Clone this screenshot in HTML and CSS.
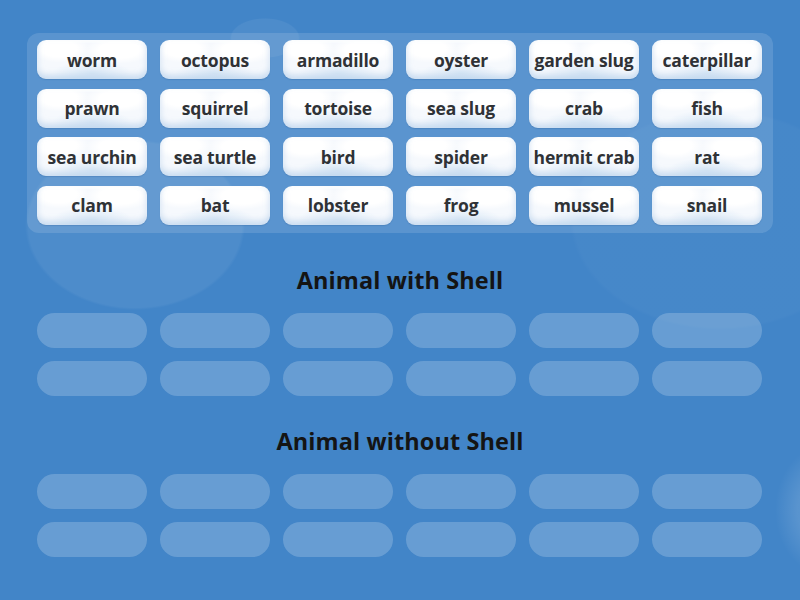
FILE: index.html
```html
<!DOCTYPE html>
<html><head><meta charset="utf-8">
<title>Animal with Shell / Animal without Shell</title>
<link rel="stylesheet" href="styles.css">
</head><body>

<div class="board">

<!-- words still to sort -->
<div class="pool">
	<div class="card">worm</div>
	<div class="card">octopus</div>
	<div class="card">armadillo</div>
	<div class="card">oyster</div>
	<div class="card">garden slug</div>
	<div class="card">caterpillar</div>
	<div class="card">prawn</div>
	<div class="card">squirrel</div>
	<div class="card">tortoise</div>
	<div class="card">sea slug</div>
	<div class="card">crab</div>
	<div class="card">fish</div>
	<div class="card">sea urchin</div>
	<div class="card">sea turtle</div>
	<div class="card">bird</div>
	<div class="card">spider</div>
	<div class="card">hermit crab</div>
	<div class="card">rat</div>
	<div class="card">clam</div>
	<div class="card">bat</div>
	<div class="card">lobster</div>
	<div class="card">frog</div>
	<div class="card">mussel</div>
	<div class="card">snail</div>
</div>

<h2 class="group-title">Animal with Shell</h2>
<div class="slots">
	<div class="slot"></div><div class="slot"></div><div class="slot"></div>
	<div class="slot"></div><div class="slot"></div><div class="slot"></div>
	<div class="slot"></div><div class="slot"></div><div class="slot"></div>
	<div class="slot"></div><div class="slot"></div><div class="slot"></div>
</div>

<h2 class="group-title">Animal without Shell</h2>
<div class="slots">
	<div class="slot"></div><div class="slot"></div><div class="slot"></div>
	<div class="slot"></div><div class="slot"></div><div class="slot"></div>
	<div class="slot"></div><div class="slot"></div><div class="slot"></div>
	<div class="slot"></div><div class="slot"></div><div class="slot"></div>
</div>

</div>

</body></html>
```

FILE: styles.css
```css
html, body {
	margin: 0;
	height: 100%;
}
body {
	font-family: "Open Sans", "Liberation Sans", sans-serif;
	background-color: #4285c8;
	background-image:
		radial-gradient(ellipse 110px 85px at 135px 225px, rgba(255,255,255,.06) 97%, transparent 100%),
		radial-gradient(ellipse 35px 20px at 265px 38px, rgba(255,255,255,.06) 95%, transparent 100%),
		radial-gradient(ellipse 150px 110px at 720px 220px, rgba(255,255,255,.025) 97%, transparent 100%),
		radial-gradient(ellipse 50px 65px at 825px 510px, rgba(255,255,255,.12) 55%, transparent 100%);
	background-repeat: no-repeat;
	overflow: hidden;
}
.board {
	padding: 33px 27px 0;
}
.pool {
	display: grid;
	grid-template-columns: repeat(6, 110px);
	grid-auto-rows: 39px;
	column-gap: 13px;
	row-gap: 9.5px;
	padding: 7px 10px 8px;
	background: rgba(255,255,255,.13);
	border-radius: 12px;
}
.card {
	display: flex;
	align-items: center;
	justify-content: center;
	font-size: 17.5px;
	font-weight: 700;
	color: #2f3236;
	letter-spacing: -.2px;
	white-space: nowrap;
	border-radius: 9px;
	background:
		radial-gradient(ellipse 30px 14px at 20% 22%, #fff 60%, transparent 100%),
		radial-gradient(ellipse 34px 14px at 75% 25%, #fff 60%, transparent 100%),
		radial-gradient(ellipse 40px 12px at 50% 85%, rgba(205,225,243,.7), transparent 100%),
		#f6f9fd;
	box-shadow:
		inset 0 -4px 6px rgba(170,200,232,.6),
		inset 0 2px 3px #fff,
		0 1px 1px rgba(40,90,150,.25);
}
.group-title {
	margin: 31px 0 17px;
	height: 32px;
	line-height: 32px;
	text-align: center;
	font-size: 23.5px;
	font-weight: 700;
	color: #141414;
	letter-spacing: .1px;
}
.slots + .group-title {
	margin-top: 29px;
}
.slots {
	display: grid;
	grid-template-columns: repeat(6, 110px);
	grid-auto-rows: 35px;
	column-gap: 13px;
	row-gap: 13px;
	padding: 0 10px;
}
.slot {
	border-radius: 18px;
	background: rgba(255,255,255,.2);
}
```
